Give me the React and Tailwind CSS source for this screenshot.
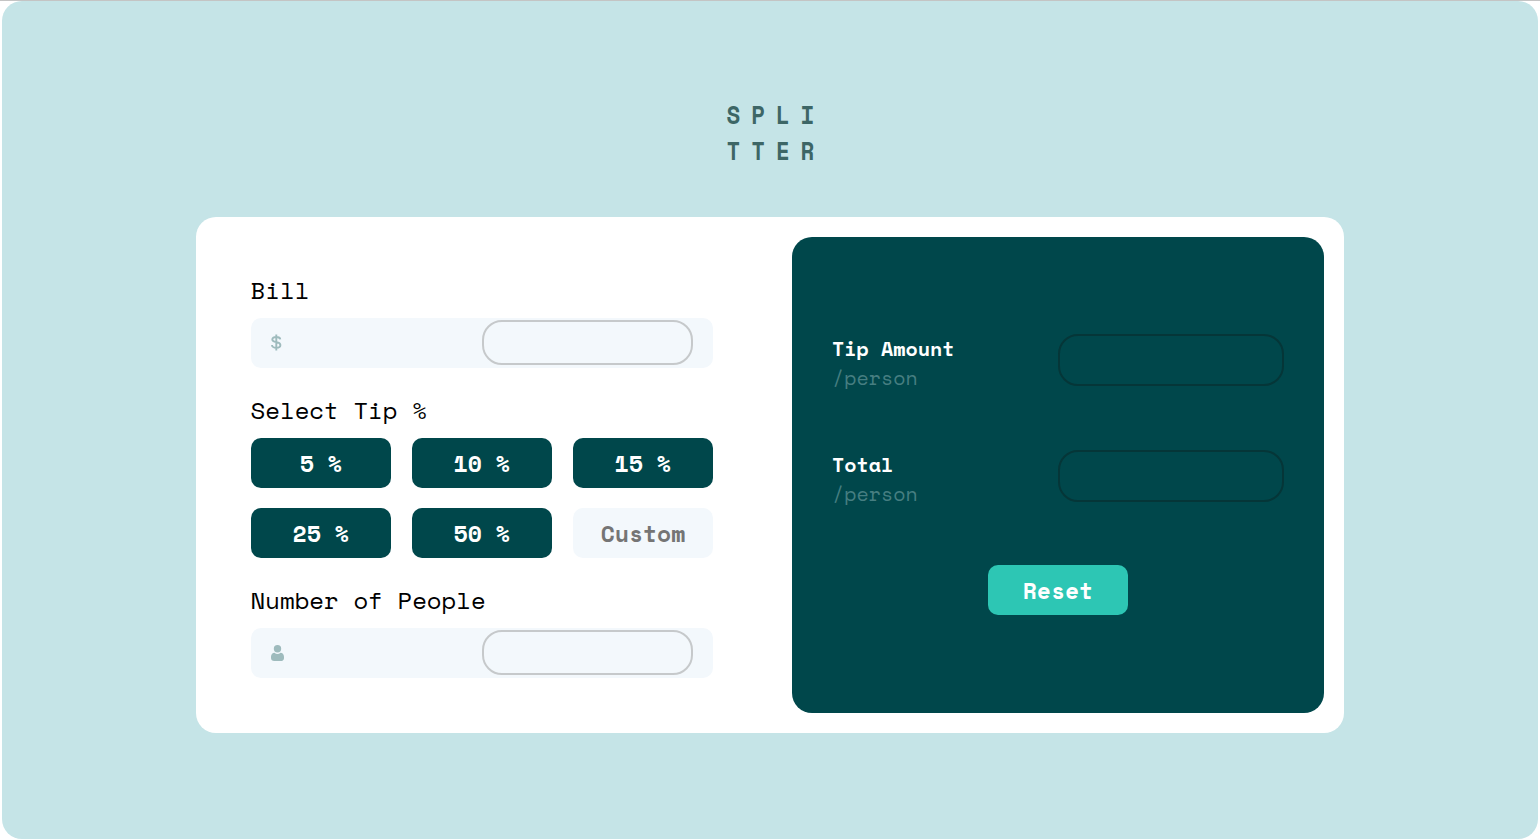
import React from "react";

const MONO = "font-['Space_Mono','Liberation_Mono',monospace]";

function DollarIcon() {
  return (
    <svg width="11" height="17" viewBox="0 0 11 17" className="mb-px" aria-hidden="true">
      <path
        d="M9.3 5.4C9.1 3.9 7.8 3 5.3 3S1.3 3.9 1.3 5.5c0 1.8 1.6 2.2 4 2.6 2.4.4 4.1 1 4.1 2.9 0 1.8-1.6 2.8-4.1 2.8S1 12.7 1 10.9M5.3.5v16"
        fill="none"
        stroke="#9EBBBD"
        strokeWidth="1.9"
      />
    </svg>
  );
}

function PersonIcon() {
  return (
    <svg width="13" height="16" viewBox="0 0 13 16" aria-hidden="true">
      <path
        fill="#9EBBBD"
        d="M9.573 7.729c.93.1 1.7.42 2.3 1.05.75.79 1.13 2.02 1.13 3.71v.5c0 1.97-1.28 3.01-3.2 3.01H3.2C1.28 16 0 14.96 0 12.99v-.5c0-1.69.37-2.92 1.12-3.71.6-.63 1.37-.95 2.3-1.05a4.9 4.9 0 0 0 6.153 0ZM6.5 0a3.7 3.7 0 1 1 0 7.4 3.7 3.7 0 0 1 0-7.4Z"
      />
    </svg>
  );
}

function Field({ label, icon }) {
  return (
    <div>
      <label className="-ml-[0.4px] block h-[50px] text-2xl leading-[44px] text-black">{label}</label>
      <div className="flex h-[50px] items-center justify-between rounded-[10px] bg-[#F3F8FC] px-5">
        {icon}
        <input
          aria-label={label}
          className="mb-px h-[45px] w-[211px] rounded-[20px] border-2 border-[#C6C9CB] bg-transparent px-3 text-right outline-none"
        />
      </div>
    </div>
  );
}

function Result({ label }) {
  return (
    <div className="flex h-[52px] items-center justify-between">
      <div className="pt-1.5 text-[20px] leading-[29px]">
        <p className="font-bold text-white">{label}</p>
        <p className="text-[#467E81]">/person</p>
      </div>
      <div className="h-[52px] w-[226px] rounded-[20px] border-2 border-[#053638]" />
    </div>
  );
}

export default function App() {
  return (
    <div className={`h-[840px] overflow-hidden border-t border-[#C4C4C4] bg-white px-[2px] pb-px ${MONO}`}>
      <main className="flex h-full flex-col items-center rounded-[20px] bg-[#C5E4E7] pt-24">
        <h1 className="ml-[12px] scale-x-90 text-[25px] font-bold leading-9 tracking-[12.14px] text-[#3D6666]">
          <span className="block">SPLI</span>
          <span className="block">TTER</span>
        </h1>
        <section className="mt-12 flex h-[516px] w-[1148px] justify-between rounded-[20px] bg-white p-5 pl-[55px]">
          <div className="flex w-[462px] flex-col pt-[31px]">
            <Field label="Bill" icon={<DollarIcon />} />
            <div className="mt-5 mb-5">
              <h2 className="-ml-[0.4px] h-[50px] text-2xl leading-[44px] text-black">Select Tip %</h2>
              <div className="grid grid-cols-3 gap-x-[21px] gap-y-5 text-[23px] font-bold">
                {["5 %", "10 %", "15 %", "25 %", "50 %"].map((tip) => (
                  <button key={tip} className="h-[50px] rounded-[10px] bg-[#00474B] pt-px pr-[0.5px] text-white">
                    {tip}
                  </button>
                ))}
                <input
                  aria-label="Custom tip"
                  placeholder="Custom"
                  className="h-[50px] w-full rounded-[10px] bg-[#F3F8FC] text-center outline-none placeholder:text-[#757575]"
                />
              </div>
            </div>
            <Field label="Number of People" icon={<PersonIcon />} />
          </div>
          <div className="flex w-[532px] flex-col rounded-[20px] bg-[#00474B] px-10 pt-[97px]">
            <div className="flex flex-col gap-16">
              <Result label="Tip Amount" />
              <Result label="Total" />
            </div>
            <button className="mt-[63px] h-[50px] w-[140px] self-center rounded-[10px] bg-[#2DC6B4] pt-px text-[23px] font-bold text-white">
              Reset
            </button>
          </div>
        </section>
      </main>
    </div>
  );
}
